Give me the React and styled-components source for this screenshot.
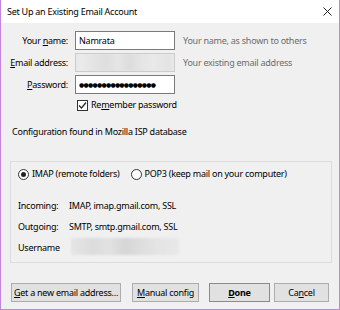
import styled, { createGlobalStyle } from "styled-components";

const Global = createGlobalStyle`
  html, body { margin: 0; padding: 0; background: #f0f0f0; }
  body {
    font-family: "Noto Sans", "Open Sans", sans-serif;
    font-size: 9px;
    letter-spacing: -0.25px;
    line-height: 12px;
    color: #000;
  }
`;

const Window = styled.div`
  width: 340px;
  height: 310px;
  box-sizing: border-box;
  border: 1px solid #c285de;
  border-top: none;
  background: #f0f0f0;
  display: flex;
  flex-direction: column;
`;

const TitleBar = styled.div`
  height: 23px;
  background: #fff;
  display: flex;
  align-items: center;
  justify-content: space-between;
  padding: 0 6px 0 6px;
  flex-shrink: 0;
`;

const Title = styled.span`
  font-size: 9px;
`;

const Close = styled.svg`
  width: 9px;
  height: 9px;
  margin-right: 1px;
`;

const Body = styled.div`
  flex: 1;
  display: flex;
  flex-direction: column;
  padding: 8px 8px 0 0;
`;

const Form = styled.div`
  display: grid;
  grid-template-columns: 67px 100px auto;
  column-gap: 7px;
  row-gap: 3px;
  align-items: center;
`;

const Label = styled.label`
  text-align: right;
  white-space: nowrap;
`;

const Input = styled.div`
  box-sizing: border-box;
  height: 19px;
  border: 1px solid #7a7a7a;
  background: ${(p) => (p.$disabled ? "#e8e8e8" : "#fff")};
  border-color: ${(p) => (p.$disabled ? "#cccccc" : "#7a7a7a")};
  padding: 0 3px;
  display: flex;
  align-items: center;
  overflow: hidden;
  white-space: nowrap;
`;

const Blur = styled.div`
  width: 100%;
  height: 100%;
  background: linear-gradient(
    90deg,
    #ececec 0%,
    #e4e4e4 15%,
    #dedede 30%,
    #e6e6e6 42%,
    #dcdcdc 55%,
    #e5e5e5 68%,
    #e9e9e9 80%,
    #e3e3e3 100%
  );
  filter: blur(1px);
`;

const Dots = styled.span`
  font-family: "DejaVu Sans", sans-serif;
  font-size: 6px;
  letter-spacing: -0.75px;
`;

const Hint = styled.span`
  color: #6d6d6d;
  margin-left: 1px;
  white-space: nowrap;
`;

const CheckRow = styled.div`
  grid-column: 2 / 4;
  display: flex;
  align-items: center;
  gap: 3px;
  margin-top: 2px;
  padding-left: 2px;
`;

const CheckBox = styled.span`
  width: 11px;
  height: 11px;
  box-sizing: border-box;
  border: 1px solid #333;
  background: #fff;
  display: flex;
  align-items: center;
  justify-content: center;
`;

const Status = styled.div`
  margin: 15px 0 0 11px;
`;

const Group = styled.div`
  margin: 23px 0 0 9px;
  width: 322px;
  height: 102px;
  box-sizing: border-box;
  border: 1px solid #dcdcdc;
  padding: 6px 0 0 7px;
  display: flex;
  flex-direction: column;
`;

const RadioRow = styled.div`
  display: flex;
  align-items: center;
  gap: 11px;
  white-space: nowrap;
`;

const RadioOpt = styled.label`
  display: flex;
  align-items: center;
  gap: 3px;
`;

const Radio = styled.span`
  width: 11px;
  height: 11px;
  box-sizing: border-box;
  border: 1px solid #333;
  border-radius: 50%;
  background: #fff;
  display: flex;
  align-items: center;
  justify-content: center;
  &::after {
    content: "";
    width: 5px;
    height: 5px;
    border-radius: 50%;
    background: ${(p) => (p.$on ? "#222" : "transparent")};
  }
`;

const Info = styled.div`
  margin-top: 20px;
  display: grid;
  grid-template-columns: 51px auto;
  row-gap: 9px;
  align-items: center;
  white-space: nowrap;
`;

const UserBlur = styled.div`
  width: 108px;
  height: 17px;
  margin: -4px 0 -1px 2px;
  background: linear-gradient(
    90deg,
    #e6e6e6 0%,
    #dcdcdc 20%,
    #e2e2e2 35%,
    #d6d6d6 50%,
    #dedede 65%,
    #e4e4e4 80%,
    #e8e8e8 100%
  );
  filter: blur(1px);
`;

const Buttons = styled.div`
  display: flex;
  align-items: center;
  margin: 20px 0 0 10px;
`;

const Button = styled.button`
  box-sizing: border-box;
  height: 19px;
  width: ${(p) => p.$w}px;
  margin-left: ${(p) => p.$gap || 0}px;
  background: #e1e1e1;
  border: 1px solid ${(p) => (p.$default ? "#8a8a8a" : "#adadad")};
  font-family: inherit;
  font-size: 9px;
  letter-spacing: -0.25px;
  font-weight: ${(p) => (p.$default ? 700 : 400)};
  color: #000;
  padding: 0;
  white-space: nowrap;
`;

export default function App() {
  return (
    <>
      <Global />
      <Window>
        <TitleBar>
          <Title>Set Up an Existing Email Account</Title>
          <Close viewBox="0 0 9 9">
            <path d="M0.5 0.5 L8.5 8.5 M8.5 0.5 L0.5 8.5" stroke="#222" strokeWidth="1" />
          </Close>
        </TitleBar>
        <Body>
          <Form>
            <Label>
              Your <u>n</u>ame:
            </Label>
            <Input>Namrata</Input>
            <Hint>Your name, as shown to others</Hint>

            <Label>
              <u>E</u>mail address:
            </Label>
            <Input $disabled>
              <Blur />
            </Input>
            <Hint>Your existing email address</Hint>

            <Label>
              <u>P</u>assword:
            </Label>
            <Input>
              <Dots>●●●●●●●●●●●●●●●●●</Dots>
            </Input>
            <span />

            <span />
            <CheckRow>
              <CheckBox>
                <svg width="9" height="9" viewBox="0 0 9 9">
                  <path d="M1 4.5 L3.5 7 L8 1.5" fill="none" stroke="#222" strokeWidth="1.2" />
                </svg>
              </CheckBox>
              <span>
                Re<u>m</u>ember password
              </span>
            </CheckRow>
          </Form>

          <Status>Configuration found in Mozilla ISP database</Status>

          <Group>
            <RadioRow>
              <RadioOpt>
                <Radio $on />
                IMAP (remote folders)
              </RadioOpt>
              <RadioOpt>
                <Radio />
                POP3 (keep mail on your computer)
              </RadioOpt>
            </RadioRow>
            <Info>
              <span>Incoming:</span>
              <span>IMAP, imap.gmail.com, SSL</span>
              <span>Outgoing:</span>
              <span>SMTP, smtp.gmail.com, SSL</span>
              <span>Username</span>
              <UserBlur />
            </Info>
          </Group>

          <Buttons>
            <Button $w={110}>
              <u>G</u>et a new email address...
            </Button>
            <Button $w={67} $gap={11}>
              <u>M</u>anual config
            </Button>
            <Button $w={61} $gap={10} $default>
              <u>D</u>one
            </Button>
            <Button $w={55} $gap={4}>
              Ca<u>n</u>cel
            </Button>
          </Buttons>
        </Body>
      </Window>
    </>
  );
}
